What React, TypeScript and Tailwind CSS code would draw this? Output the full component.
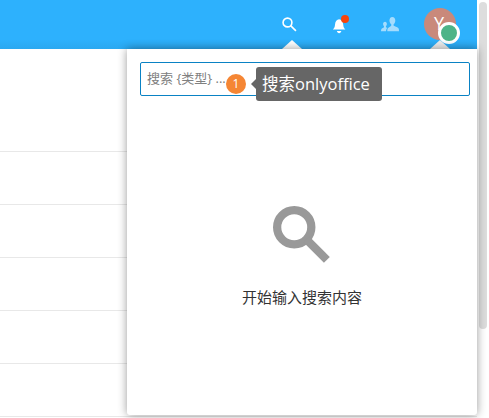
import React from "react";

function SearchIcon({ className, sw }: { className: string; sw: number }) {
  return (
    <svg viewBox="0 0 56 56" className={className} fill="none" stroke="currentColor" strokeWidth={sw}>
      <circle cx="20.5" cy="20.5" r="16.5" />
      <path d="M32 32 L52 52" />
    </svg>
  );
}

export default function App() {
  return (
    <div className="relative flex h-[418px] w-[489px] overflow-hidden bg-white font-['Open_Sans','Noto_Sans_CJK_SC',sans-serif]">
      <div className="flex w-[477px] flex-col">
        <header className="relative flex h-[49px] shrink-0 items-center justify-end bg-gradient-to-b from-[#2db1fd] from-80% to-[#2aa8f0] text-white">
          <div className="relative flex h-full w-[51px] items-center justify-center">
            <SearchIcon className="h-[15px] w-[15px]" sw={6} />
            <div className="absolute bottom-0 left-[18px] h-0 w-0 border-x-[10px] border-b-[9px] border-x-transparent border-b-white" />
          </div>
          <div className="flex h-full w-[50px] items-center justify-center">
            <div className="relative h-[18px] w-[16px]">
              <svg viewBox="0 0 18 18" className="h-[18px] w-[16px]" fill="#fff" preserveAspectRatio="none">
                <path d="M1 13.500c1.500-1.200 2.200-2.500 2.400-5C3.700 5 5.500 3.400 8 3.200c2.600.2 4.300 1.800 4.600 5.300.2 2.500.9 3.800 2.400 5H1z" />
                <path d="M5.500 15h5c-.3 1.300-1.300 2.200-2.500 2.200S5.800 16.300 5.500 15z" />
              </svg>
              <div className="absolute right-[-1px] top-[-1px] h-[8px] w-[8px] rounded-full bg-[#f8450c]" />
            </div>
          </div>
          <div className="flex h-full w-[48px] items-center justify-center">
            <svg viewBox="0 0 20 20" className="ml-[1px] h-[18px] w-[18px]" fill="#a5dcfd">
              <path d="M12.500 1c2.200 0 3.400 1.800 3.400 4 0 1.900-.9 3.400-1.900 4.300v1.300c0 .8 4.800 1.400 5.700 3.700.3.700.3 2.700.3 2.700H7c0-1.800.2-3 .9-3.600 1.600-1.300 3.500-1.900 3.500-2.800V9.300C10.400 8.400 9.400 6.900 9.400 5c0-2.200 1-4 3.100-4z" />
              <path d="M4.500 6.500c1.300 0 2 1.100 2 2.400 0 1-.5 1.900-1 2.400v.9c0 .4.900.7 1.500 1-.9.800-1.300 2-1.400 3.800H0c0-1.300.1-2.100.5-2.600.9-1 2.800-1.300 2.800-2.100v-1c-.6-.5-1-1.400-1-2.400 0-1.300.8-2.400 2.200-2.400z" />
            </svg>
          </div>
          <div className="relative ml-[11px] mr-[21px] h-full w-[32px]">
            <div className="absolute left-0 top-[8px] flex h-[32px] w-[32px] items-center justify-center rounded-full bg-[#c9897b] text-[18px] leading-none text-white">
              <span className="mb-[2px] mr-[2px]">Y</span>
            </div>
            <div className="absolute bottom-0 left-[6px] h-0 w-0 border-x-[10px] border-b-[9px] border-x-transparent border-b-[#ececec]" />
            <div className="absolute left-[14px] top-[22px] h-[22px] w-[22px] rounded-full border-[3px] border-white bg-[#4db488]" />
          </div>
        </header>
        <div className="flex flex-col">
          <div className="h-[103px] border-b border-[#e8e8e8]" />
          <div className="h-[53px] border-b border-[#e8e8e8]" />
          <div className="h-[53px] border-b border-[#e8e8e8]" />
          <div className="h-[53px] border-b border-[#e8e8e8]" />
          <div className="h-[53px] border-b border-[#e8e8e8]" />
          <div className="h-[53px] border-b border-[#e8e8e8]" />
        </div>
      </div>

      <div className="ml-[2px] mt-[2px] h-[327px] w-[8px] rounded-[4px] bg-[#dddddd]" />

      <section className="absolute left-[127px] top-[49px] flex h-[366px] w-[350px] flex-col items-center rounded-b-[3px] bg-white pt-[13px] shadow-[0_0_10px_rgba(0,0,0,0.4)]">
        <div className="relative ml-[13px] flex h-[34px] w-[330px] shrink-0 items-center self-start rounded-[2px] border border-[#0a82c4] pl-[6px] text-[13px] text-[#808080]">
          <span>搜索 {"{类型}"} ...</span>
          <div className="absolute left-[85px] top-[11px] flex h-[20px] w-[20px] items-center justify-center rounded-full bg-[#f58634] text-[12px] text-white">
            1
          </div>
          <div className="absolute left-[115px] top-[4px] flex h-[34px] w-[126px] items-center rounded-[3px] bg-[#666666] pl-[6px] text-[16.5px] text-white">
            搜索onlyoffice
            <div className="absolute left-[-5px] top-[12px] h-0 w-0 border-y-[5px] border-r-[5px] border-y-transparent border-r-[#666666]" />
          </div>
        </div>
        <SearchIcon className="mt-[110px] h-[58px] w-[58px] text-[#999999]" sw={8} />
        <p className="mt-[23px] text-[15px] leading-[20px] text-[#333333]">开始输入搜索内容</p>
      </section>
    </div>
  );
}
